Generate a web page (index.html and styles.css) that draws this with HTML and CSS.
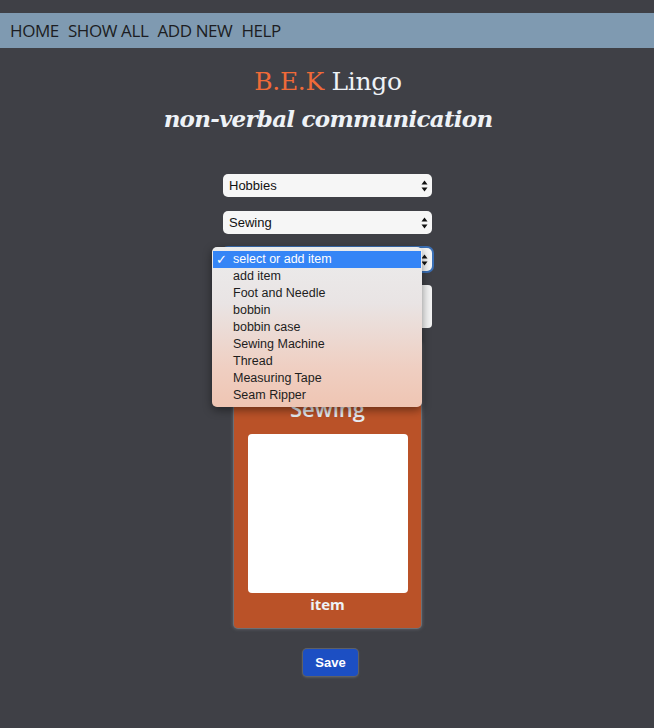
FILE: index.html
```html
<!DOCTYPE html>
<html>
<head>
<meta charset="utf-8">
<link rel="stylesheet" href="styles.css">
</head>
<body>
<nav class="nav">
  <a class="nav-link">HOME</a>
  <a class="nav-link">SHOW ALL</a>
  <a class="nav-link">ADD NEW</a>
  <a class="nav-link">HELP</a>
</nav>
<header class="head">
  <h1 class="title"><span class="brand">B.E.K</span> Lingo</h1>
  <h2 class="subtitle">non-verbal communication</h2>
</header>
<main class="form">
  <div class="select"><span>Hobbies</span><svg class="arrows" width="7" height="12" viewBox="0 0 7 12"><path d="M3.5 0.5 L6.5 4.5 H0.5 Z M3.5 11.5 L6.5 7.5 H0.5 Z" fill="#111"/></svg></div>
  <div class="select"><span>Sewing</span><svg class="arrows" width="7" height="12" viewBox="0 0 7 12"><path d="M3.5 0.5 L6.5 4.5 H0.5 Z M3.5 11.5 L6.5 7.5 H0.5 Z" fill="#111"/></svg></div>
  <div class="select-wrap">
    <div class="select focused"><span class="hidden-value">select or add item</span><svg class="arrows" width="7" height="12" viewBox="0 0 7 12"><path d="M3.5 0.5 L6.5 4.5 H0.5 Z M3.5 11.5 L6.5 7.5 H0.5 Z" fill="#111"/></svg></div>
    <ul class="menu">
      <li class="menu-item active"><span class="check">✓</span>select or add item</li>
      <li class="menu-item">add item</li>
      <li class="menu-item">Foot and Needle</li>
      <li class="menu-item">bobbin</li>
      <li class="menu-item">bobbin case</li>
      <li class="menu-item">Sewing Machine</li>
      <li class="menu-item">Thread</li>
      <li class="menu-item">Measuring Tape</li>
      <li class="menu-item">Seam Ripper</li>
    </ul>
  </div>
  <div class="textbox"></div>
  <section class="card">
    <div class="card-title">Sewing</div>
    <div class="card-image"></div>
    <div class="card-label">item</div>
  </section>
  <button class="save">Save</button>
</main>
</body>
</html>
```
FILE: styles.css
```css
html, body {
  margin: 0;
  padding: 0;
  background: #3f4046;
}
body {
  padding-top: 13px;
  min-height: 715px;
}
.nav {
  height: 35px;
  background: #7f9ab1;
  display: flex;
  align-items: center;
  padding-left: 10px;
  gap: 9px;
  font-family: "Open Sans", sans-serif;
  font-size: 17px;
}
.nav-link {
  color: #1c1d22;
  letter-spacing: -0.4px;
}
.head {
  text-align: center;
  padding-top: 14px;
}
.title {
  margin: 0;
  font-family: "DejaVu Serif", serif;
  font-weight: normal;
  font-size: 25px;
  line-height: 40px;
  color: #eef2f6;
  letter-spacing: -0.3px;
  padding-left: 2px;
}
.brand {
  color: #f06a38;
}
.subtitle {
  margin: 0;
  font-family: "DejaVu Serif", serif;
  font-style: italic;
  font-weight: bold;
  font-size: 23px;
  line-height: 34px;
  color: #eef2f6;
  letter-spacing: -0.75px;
  padding-left: 2px;
}
.form {
  display: flex;
  flex-direction: column;
  align-items: center;
  padding-top: 38px;
}
.select {
  box-sizing: border-box;
  width: 209px;
  height: 23px;
  margin-left: 1px;
  background: #f6f6f6;
  border-radius: 5px;
  display: flex;
  align-items: center;
  justify-content: space-between;
  padding: 0 4px 0 6px;
  font-family: "Liberation Sans", Arial, sans-serif;
  font-size: 13px;
  color: #111;
  margin-bottom: 14px;
}
.select-wrap {
  position: relative;
  margin-bottom: 14px;
}
.select-wrap .select {
  margin-bottom: 0;
}
.hidden-value {
  visibility: hidden;
}
.focused {
  box-shadow: 0 0 0 2px #3a6fb5;
}
.menu {
  position: absolute;
  left: -10px;
  top: -1px;
  width: 210px;
  height: 160px;
  box-sizing: border-box;
  margin: 0;
  padding: 4px 1px 0;
  list-style: none;
  border-radius: 5px;
  background: linear-gradient(180deg, #ececec 0%, #e9e4e4 35%, #efcfc2 75%, #efc5b3 100%);
  box-shadow: 0 3px 10px rgba(0, 0, 0, 0.45);
  font-family: "Liberation Sans", Arial, sans-serif;
  font-size: 12.5px;
  color: #1d1d1d;
  z-index: 2;
}
.menu-item {
  position: relative;
  height: 17px;
  line-height: 17px;
  padding-left: 20px;
}
.menu-item.active {
  background: #3585f6;
  color: #ffffff;
}
.check {
  position: absolute;
  left: 3px;
  top: 0;
  font-family: "DejaVu Sans", sans-serif;
  font-size: 13px;
  font-weight: bold;
}
.textbox {
  width: 209px;
  height: 43px;
  margin-left: 1px;
  background: #f3f3f3;
  border-radius: 4px;
  margin-bottom: 14px;
}
.card {
  box-sizing: border-box;
  width: 187px;
  height: 286px;
  margin-left: 1px;
  background: #ba5228;
  border-radius: 4px;
  box-shadow: 0 0 0 1px #6d6f75, 0 0 3px 2px #55575d;
  display: flex;
  flex-direction: column;
  align-items: center;
  padding-top: 51px;
}
.card-title {
  font-family: "Open Sans", sans-serif;
  font-weight: 600;
  font-size: 22px;
  line-height: 31px;
  color: #e6ecf2;
}
.card-image {
  margin-top: 10px;
  width: 160px;
  height: 159px;
  background: #ffffff;
  border-radius: 4px;
}
.card-label {
  font-family: "Open Sans", sans-serif;
  font-weight: 700;
  font-size: 15px;
  line-height: 22px;
  color: #eef2f6;
  margin-top: 0;
}
.save {
  margin-top: 21px;
  margin-left: 7px;
  width: 55px;
  height: 27px;
  border: none;
  border-radius: 4px;
  background: #1c4fc3;
  color: #ffffff;
  font-family: "Liberation Sans", Arial, sans-serif;
  font-weight: bold;
  font-size: 13px;
  box-shadow: 0 0 0 1px #5e6066, 0 1px 2px 1px #55575d;
  padding: 0;
}
```
